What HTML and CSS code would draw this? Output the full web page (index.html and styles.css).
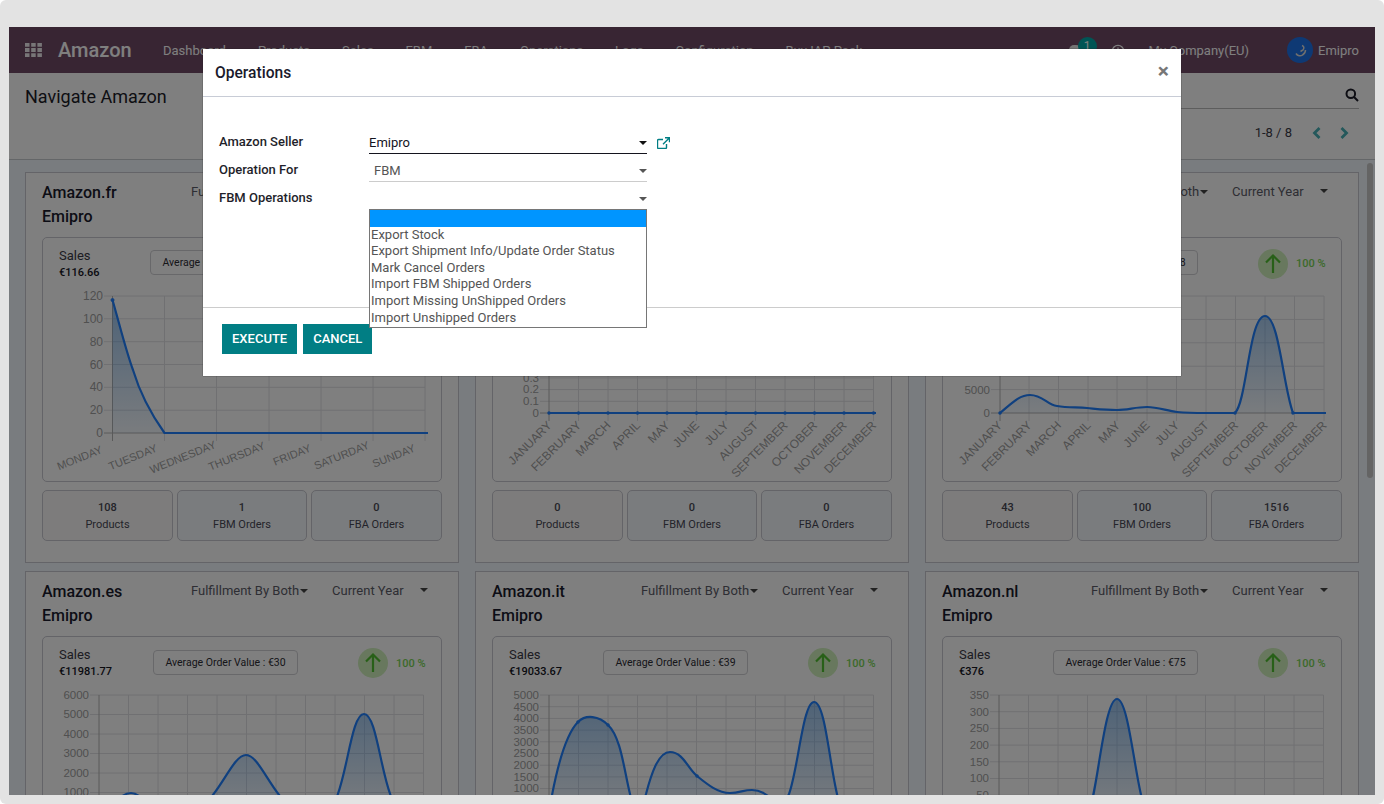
FILE: index.html

```html
<!DOCTYPE html>
<html>
<head>
    <title>Navigate Amazon</title>
    <link rel="stylesheet" href="styles.css">
</head>
<body>
<div class="frame">
    <!-- top navigation bar -->
    <header class="navbar">
        <svg class="apps" width="17" height="14" viewBox="0 0 17 14"><path d="M0 0h4.500v3.800H0zM6.200 0h4.500v3.800H6.200zM12.400 0h4.500v3.800h-4.500zM0 5.100h4.500v3.800H0zM6.200 5.100h4.500v3.800H6.200zM12.400 5.100h4.500v3.800h-4.500zM0 10.200h4.500V14H0zM6.200 10.200h4.500V14H6.200zM12.400 10.200h4.500V14h-4.500z"/></svg>
        <span class="brand">Amazon</span>
        <nav class="menu">
            <a>Dashboard</a>
            <a>Products</a>
            <a>Sales</a>
            <a>FBM</a>
            <a>FBA</a>
            <a>Operations</a>
            <a>Logs</a>
            <a>Configuration</a>
            <a>Buy IAP Pack</a>
        </nav>
        <div class="systray">
            <span class="chat"><i class="bubble"></i><b class="badge">1</b></span>
            <svg class="clock" width="14" height="14" viewBox="0 0 14 14"><circle cx="7" cy="7" r="5.700"/><path d="M7 3.500V7l2.400 1.500"/></svg>
            <span class="company">My Company(EU)</span>
            <span class="user">
                <svg class="avatar" width="26" height="26" viewBox="0 0 26 26"><circle cx="13" cy="13" r="13"/><path d="M15 8.500c2 .8 2.500 2.500 1 4.500l-2.500 1.500"/><path d="M9 16.500c1.500 2.500 4.500 3 6.500 1.500 2-1.200 3-3 3-5"/></svg>
                Emipro
            </span>
        </div>
    </header>

    <!-- title, search and pager -->
    <section class="control-panel">
        <h1>Navigate Amazon</h1>
        <div class="control-right">
            <div class="search">
                <svg width="14" height="14" viewBox="0 0 14 14"><circle cx="5.800" cy="5.800" r="4.300"/><path d="M9 9l4 4"/></svg>
            </div>
            <div class="pager">
                <span>1-8 / 8</span>
                <svg width="10" height="14" viewBox="0 0 10 14"><path d="M7.500 2L2.500 7l5 5"/></svg>
                <svg width="10" height="14" viewBox="0 0 10 14"><path d="M2.500 2l5 5-5 5"/></svg>
            </div>
        </div>
    </section>

    <!-- marketplace cards -->
    <main class="dashboard">
        <article class="card">
            <div class="card-head">
                <div class="card-title">Amazon.fr<br>Emipro</div>
                <div class="filter filter-type">Fulfillment By Both<i class="caret"></i></div>
                <div class="filter filter-year">Current Year<i class="caret"></i></div>
            </div>
            <div class="chart-box">
                <div class="chart-head">
                    <div class="sales">Sales<b>€116.66</b></div>
                    <div class="avg">Average Order Value : €117</div>
                    <div class="trend"><svg width="30" height="30" viewBox="0 0 30 30"><circle cx="15" cy="15" r="15"/><path d="M15 24V6.500M8 13.500l7-7 7 7"/></svg>100 %</div>
                </div>
                <svg class="chart" width="398" height="195">
                    <defs>
                        <linearGradient id="fill-week" gradientUnits="userSpaceOnUse" x1="0" y1="10" x2="0" y2="147"><stop offset="0" stop-color="#1a78d8" stop-opacity=".45"/><stop offset="1" stop-color="#1a78d8" stop-opacity=".05"/></linearGradient>
                        <linearGradient id="fill-year" gradientUnits="userSpaceOnUse" x1="0" y1="10" x2="0" y2="127"><stop offset="0" stop-color="#1a78d8" stop-opacity=".45"/><stop offset="1" stop-color="#1a78d8" stop-opacity=".05"/></linearGradient>
                    </defs>
                    <path class="grid" d="M121.500 10V155M173.500 10V155M226 10V155M278 10V155M330 10V155M382 10V155M61 10H382M61 32.800H382M61 55.700H382M61 78.500H382M61 101.300H382M61 124.200H382"/>
                    <path class="axis" d="M69.500 10V155M61 147H382"/>
                    <text class="tick tick-large" x="60" y="14">120</text><text class="tick tick-large" x="60" y="37">100</text><text class="tick tick-large" x="60" y="60">80</text><text class="tick tick-large" x="60" y="83">60</text><text class="tick tick-large" x="60" y="105">40</text><text class="tick tick-large" x="60" y="128">20</text><text class="tick tick-large" x="60" y="151">0</text>
                    <path class="area-week" d="M69.500 14C77 40 83 65 90 84C96 104 108 128 121.500 147H385H69.500Z"/>
                    <path class="line" d="M69.500 14C77 40 83 65 90 84C96 104 108 128 121.500 147H385"/>
                    <circle class="dot" cx="69.500" cy="14" r="1.500"/>
                    <g class="label label-week">
                        <text transform="translate(60 166.500) rotate(-22)">MONDAY</text>
                        <text transform="translate(115 165) rotate(-22)">TUESDAY</text>
                        <text transform="translate(173.700 161.500) rotate(-22)">WEDNESDAY</text>
                        <text transform="translate(222.700 162.500) rotate(-22)">THURSDAY</text>
                        <text transform="translate(268.700 165) rotate(-22)">FRIDAY</text>
                        <text transform="translate(327 162) rotate(-22)">SATURDAY</text>
                        <text transform="translate(373 165) rotate(-22)">SUNDAY</text>
                    </g>
                </svg>
            </div>
            <div class="stats">
                <div class="stat stat-products"><b>108</b>Products</div>
                <div class="stat stat-orders"><b>1</b>FBM Orders</div>
                <div class="stat stat-orders"><b>0</b>FBA Orders</div>
            </div>
        </article>

        <article class="card">
            <div class="card-head">
                <div class="card-title">Amazon.de<br>Emipro</div>
                <div class="filter filter-type">Fulfillment By Both<i class="caret"></i></div>
                <div class="filter filter-year">Current Year<i class="caret"></i></div>
            </div>
            <div class="chart-box">
                <div class="chart-head">
                    <div class="sales">Sales<b>€0</b></div>
                    <div class="avg">Average Order Value : €0</div>
                    <div class="trend"><svg width="30" height="30" viewBox="0 0 30 30"><circle cx="15" cy="15" r="15"/><path d="M15 24V6.500M8 13.500l7-7 7 7"/></svg>0 %</div>
                </div>
                <svg class="chart" width="398" height="195">
                    <path class="grid" d="M85.500 10V135M115 10V135M144.500 10V135M174 10V135M203.500 10V135M233 10V135M262.500 10V135M292 10V135M321.500 10V135M351 10V135M380.500 10V135M47 10H380.500M47 21.700H380.500M47 33.400H380.500M47 45.100H380.500M47 56.800H380.500M47 68.500H380.500M47 80.200H380.500M47 91.900H380.500M47 103.600H380.500M47 115.300H380.500"/>
                    <path class="axis" d="M56 10V135M47 127H380.500"/>
                    <text class="tick" x="46" y="14">1.0</text><text class="tick" x="46" y="26">0.9</text><text class="tick" x="46" y="37">0.8</text><text class="tick" x="46" y="49">0.7</text><text class="tick" x="46" y="61">0.6</text><text class="tick" x="46" y="72">0.5</text><text class="tick" x="46" y="84">0.4</text><text class="tick" x="46" y="96">0.3</text><text class="tick" x="46" y="107">0.2</text><text class="tick" x="46" y="119">0.1</text><text class="tick" x="46" y="131">0</text>
                    <path class="line" d="M56 127H383"/>
                    <path class="dots" d="M56 127h.01M85.500 127h.01M115 127h.01M144.500 127h.01M174 127h.01M203.500 127h.01M233 127h.01M262.500 127h.01M292 127h.01M321.500 127h.01M351 127h.01M380.500 127h.01"/>
                    <g class="label">
                        <text transform="translate(59.500 140) rotate(-45)">JANUARY</text>
                        <text transform="translate(89 140) rotate(-45)">FEBRUARY</text>
                        <text transform="translate(118.500 140) rotate(-45)">MARCH</text>
                        <text transform="translate(148 140) rotate(-45)">APRIL</text>
                        <text transform="translate(177.500 140) rotate(-45)">MAY</text>
                        <text transform="translate(207 140) rotate(-45)">JUNE</text>
                        <text transform="translate(236.500 140) rotate(-45)">JULY</text>
                        <text transform="translate(266 140) rotate(-45)">AUGUST</text>
                        <text transform="translate(295.500 140) rotate(-45)">SEPTEMBER</text>
                        <text transform="translate(325 140) rotate(-45)">OCTOBER</text>
                        <text transform="translate(354.500 140) rotate(-45)">NOVEMBER</text>
                        <text transform="translate(384 140) rotate(-45)">DECEMBER</text>
                    </g>
                </svg>
            </div>
            <div class="stats">
                <div class="stat stat-products"><b>0</b>Products</div>
                <div class="stat stat-orders"><b>0</b>FBM Orders</div>
                <div class="stat stat-orders"><b>0</b>FBA Orders</div>
            </div>
        </article>

        <article class="card">
            <div class="card-head">
                <div class="card-title">Amazon.com<br>Emipro</div>
                <div class="filter filter-type">Fulfillment By Both<i class="caret"></i></div>
                <div class="filter filter-year">Current Year<i class="caret"></i></div>
            </div>
            <div class="chart-box">
                <div class="chart-head">
                    <div class="sales">Sales<b>€34128.52</b></div>
                    <div class="avg">Average Order Value : €78</div>
                    <div class="trend"><svg width="30" height="30" viewBox="0 0 30 30"><circle cx="15" cy="15" r="15"/><path d="M15 24V6.500M8 13.500l7-7 7 7"/></svg>100 %</div>
                </div>
                <svg class="chart" width="398" height="195">
                    <path class="grid" d="M86 10V135M115.500 10V135M145 10V135M174 10V135M204 10V135M233.500 10V135M263 10V135M292.500 10V135M322 10V135M351.500 10V135M381 10V135M48 10H381M48 33.400H381M48 56.800H381M48 80.200H381M48 103.600H381"/>
                    <path class="axis" d="M57 10V135M48 127H381"/>
                    <text class="tick" x="47" y="14">25000</text><text class="tick" x="47" y="37">20000</text><text class="tick" x="47" y="61">15000</text><text class="tick" x="47" y="84">10000</text><text class="tick" x="47" y="108">5000</text><text class="tick" x="47" y="131">0</text>
                    <path class="area-year" d="M57 127C68 118 76 109 87 109C100 109 104 119 114 120C125 122 134 121 144 122C155 123 163 124 174 124C185 124 192 121 204 121C215 121 224 125 234 126C245 127 255 127 263 127H292C304 115 306 30 322 30C336 30 340 100 350 127H383H57Z"/>
                    <path class="line" d="M57 127C68 118 76 109 87 109C100 109 104 119 114 120C125 122 134 121 144 122C155 123 163 124 174 124C185 124 192 121 204 121C215 121 224 125 234 126C245 127 255 127 263 127H292C304 115 306 30 322 30C336 30 340 100 350 127H383"/>
                    <path class="dots" d="M57 127h.01M292 127h.01M350 127h.01"/>
                    <g class="label">
                        <text transform="translate(60 140) rotate(-45)">JANUARY</text>
                        <text transform="translate(89.500 140) rotate(-45)">FEBRUARY</text>
                        <text transform="translate(119 140) rotate(-45)">MARCH</text>
                        <text transform="translate(148.500 140) rotate(-45)">APRIL</text>
                        <text transform="translate(178 140) rotate(-45)">MAY</text>
                        <text transform="translate(207.500 140) rotate(-45)">JUNE</text>
                        <text transform="translate(237 140) rotate(-45)">JULY</text>
                        <text transform="translate(266.500 140) rotate(-45)">AUGUST</text>
                        <text transform="translate(296 140) rotate(-45)">SEPTEMBER</text>
                        <text transform="translate(325.500 140) rotate(-45)">OCTOBER</text>
                        <text transform="translate(355 140) rotate(-45)">NOVEMBER</text>
                        <text transform="translate(384.500 140) rotate(-45)">DECEMBER</text>
                    </g>
                </svg>
            </div>
            <div class="stats">
                <div class="stat stat-products"><b>43</b>Products</div>
                <div class="stat stat-orders"><b>100</b>FBM Orders</div>
                <div class="stat stat-orders"><b>1516</b>FBA Orders</div>
            </div>
        </article>

        <article class="card">
            <div class="card-head">
                <div class="card-title">Amazon.es<br>Emipro</div>
                <div class="filter filter-type">Fulfillment By Both<i class="caret"></i></div>
                <div class="filter filter-year">Current Year<i class="caret"></i></div>
            </div>
            <div class="chart-box">
                <div class="chart-head">
                    <div class="sales">Sales<b>€11981.77</b></div>
                    <div class="avg">Average Order Value : €30</div>
                    <div class="trend"><svg width="30" height="30" viewBox="0 0 30 30"><circle cx="15" cy="15" r="15"/><path d="M15 24V6.500M8 13.500l7-7 7 7"/></svg>100 %</div>
                </div>
                <svg class="chart" width="398" height="195">
                    <path class="grid" d="M85.500 10V135M115 10V135M144.500 10V135M174 10V135M203.500 10V135M233 10V135M262.500 10V135M292 10V135M321.500 10V135M351 10V135M380.500 10V135M47 10H380.500M47 29.500H380.500M47 49H380.500M47 68.500H380.500M47 88H380.500M47 107.500H380.500"/>
                    <path class="axis" d="M56 10V135M47 127H380.500"/>
                    <text class="tick" x="46" y="14">6000</text><text class="tick" x="46" y="33">5000</text><text class="tick" x="46" y="53">4000</text><text class="tick" x="46" y="72">3000</text><text class="tick" x="46" y="92">2000</text><text class="tick" x="46" y="111">1000</text><text class="tick" x="46" y="131">0</text>
                    <path class="area-year" d="M56 127C70 127 75 108 88 108C100 108 105 127 115 127H144C172 127 187 70 203 70C219 70 234 127 262 127H280C303 127 305 29 321 29C337 29 339 127 362 127H380.500H56Z"/>
                    <path class="line" d="M56 127C70 127 75 108 88 108C100 108 105 127 115 127H144C172 127 187 70 203 70C219 70 234 127 262 127H280C303 127 305 29 321 29C337 29 339 127 362 127H380.500"/>
                </svg>
            </div>
            <div class="stats">
                <div class="stat stat-products"><b>52</b>Products</div>
                <div class="stat stat-orders"><b>12</b>FBM Orders</div>
                <div class="stat stat-orders"><b>388</b>FBA Orders</div>
            </div>
        </article>

        <article class="card">
            <div class="card-head">
                <div class="card-title">Amazon.it<br>Emipro</div>
                <div class="filter filter-type">Fulfillment By Both<i class="caret"></i></div>
                <div class="filter filter-year">Current Year<i class="caret"></i></div>
            </div>
            <div class="chart-box">
                <div class="chart-head">
                    <div class="sales">Sales<b>€19033.67</b></div>
                    <div class="avg">Average Order Value : €39</div>
                    <div class="trend"><svg width="30" height="30" viewBox="0 0 30 30"><circle cx="15" cy="15" r="15"/><path d="M15 24V6.500M8 13.500l7-7 7 7"/></svg>100 %</div>
                </div>
                <svg class="chart" width="398" height="195">
                    <path class="grid" d="M85.500 10V135M115 10V135M144.500 10V135M174 10V135M203.500 10V135M233 10V135M262.500 10V135M292 10V135M321.500 10V135M351 10V135M380.500 10V135M47 10H380.500M47 21.700H380.500M47 33.400H380.500M47 45.100H380.500M47 56.800H380.500M47 68.500H380.500M47 80.200H380.500M47 91.900H380.500M47 103.600H380.500M47 115.300H380.500"/>
                    <path class="axis" d="M56 10V135M47 127H380.500"/>
                    <text class="tick" x="46" y="14">5000</text><text class="tick" x="46" y="26">4500</text><text class="tick" x="46" y="37">4000</text><text class="tick" x="46" y="49">3500</text><text class="tick" x="46" y="61">3000</text><text class="tick" x="46" y="72">2500</text><text class="tick" x="46" y="84">2000</text><text class="tick" x="46" y="96">1500</text><text class="tick" x="46" y="107">1000</text><text class="tick" x="46" y="119">500</text><text class="tick" x="46" y="131">0</text>
                    <path class="area-year" d="M56 127C63 85 72 50 85 37C93 29 106 31 115 40C128 52 131 85 137 109C139 118 140 127 144 127C149 127 150 118 153 109C158 90 165 67 177 67C190 67 195 84 204 91C215 100 225 108 237 108C247 108 250 105 259 105C268 105 274 110 280 115C285 122 290 122 296 109C305 85 310 17 321 17C332 17 336 75 344 109C346 118 348 127 351 127H380.500H56Z"/>
                    <path class="line" d="M56 127C63 85 72 50 85 37C93 29 106 31 115 40C128 52 131 85 137 109C139 118 140 127 144 127C149 127 150 118 153 109C158 90 165 67 177 67C190 67 195 84 204 91C215 100 225 108 237 108C247 108 250 105 259 105C268 105 274 110 280 115C285 122 290 122 296 109C305 85 310 17 321 17C332 17 336 75 344 109C346 118 348 127 351 127H380.500"/>
                    <path class="dots" d="M85 37h.01M115 40h.01M204 91h.01"/>
                </svg>
            </div>
            <div class="stats">
                <div class="stat stat-products"><b>31</b>Products</div>
                <div class="stat stat-orders"><b>8</b>FBM Orders</div>
                <div class="stat stat-orders"><b>480</b>FBA Orders</div>
            </div>
        </article>

        <article class="card">
            <div class="card-head">
                <div class="card-title">Amazon.nl<br>Emipro</div>
                <div class="filter filter-type">Fulfillment By Both<i class="caret"></i></div>
                <div class="filter filter-year">Current Year<i class="caret"></i></div>
            </div>
            <div class="chart-box">
                <div class="chart-head">
                    <div class="sales">Sales<b>€376</b></div>
                    <div class="avg">Average Order Value : €75</div>
                    <div class="trend"><svg width="30" height="30" viewBox="0 0 30 30"><circle cx="15" cy="15" r="15"/><path d="M15 24V6.500M8 13.500l7-7 7 7"/></svg>100 %</div>
                </div>
                <svg class="chart" width="398" height="195">
                    <path class="grid" d="M85.500 10V135M115 10V135M144.500 10V135M174 10V135M203.500 10V135M233 10V135M262.500 10V135M292 10V135M321.500 10V135M351 10V135M380.500 10V135M47 10H380.500M47 26.700H380.500M47 43.400H380.500M47 60.100H380.500M47 76.800H380.500M47 93.500H380.500M47 110.200H380.500"/>
                    <path class="axis" d="M56 10V135M47 127H380.500"/>
                    <text class="tick" x="46" y="14">350</text><text class="tick" x="46" y="31">300</text><text class="tick" x="46" y="47">250</text><text class="tick" x="46" y="64">200</text><text class="tick" x="46" y="81">150</text><text class="tick" x="46" y="97">100</text><text class="tick" x="46" y="114">50</text><text class="tick" x="46" y="131">0</text>
                    <path class="area-year" d="M56 127H144C153 127 160 14 174 14C188 14 194 127 206 127H380.500H56Z"/>
                    <path class="line" d="M56 127H144C153 127 160 14 174 14C188 14 194 127 206 127H380.500"/>
                </svg>
            </div>
            <div class="stats">
                <div class="stat stat-products"><b>9</b>Products</div>
                <div class="stat stat-orders"><b>0</b>FBM Orders</div>
                <div class="stat stat-orders"><b>5</b>FBA Orders</div>
            </div>
        </article>
        <div class="scrollbar"></div>
    </main>

    <!-- the wizard dialog -->
    <div class="backdrop">
        <div class="modal">
            <div class="modal-head">
                <h2>Operations</h2>
                <span class="close">×</span>
            </div>
            <div class="modal-body">
                <div class="field">
                    <label>Amazon Seller</label>
                    <div class="select select-focus">Emipro<i class="caret caret-dark"></i></div>
                    <svg class="ext-link" width="13" height="12" viewBox="0 0 13 12"><path d="M9.500 7v3.500a1 1 0 0 1-1 1h-7a1 1 0 0 1-1-1v-7a1 1 0 0 1 1-1H6"/><path d="M8 .7h4.500v4.500M12.500 .7L6 7.200"/></svg>
                </div>
                <div class="field">
                    <label>Operation For</label>
                    <div class="select select-value">FBM<i class="caret"></i></div>
                </div>
                <div class="field">
                    <label>FBM Operations</label>
                    <div class="select select-open">
                        <i class="caret"></i>
                        <ul class="dropdown">
                            <li class="selected"></li>
                            <li>Export Stock</li>
                            <li>Export Shipment Info/Update Order Status</li>
                            <li>Mark Cancel Orders</li>
                            <li>Import FBM Shipped Orders</li>
                            <li>Import Missing UnShipped Orders</li>
                            <li>Import Unshipped Orders</li>
                        </ul>
                    </div>
                </div>
            </div>
            <div class="modal-foot">
                <button>Execute</button>
                <button>Cancel</button>
            </div>
        </div>
    </div>
</div>
</body>
</html>
```

FILE: styles.css

```css
/* Page and the window frame */
* {
    box-sizing: border-box;
}
html, body {
    height: 100%;
}
html {
    background: #fff;
}
body {
    margin: 0;
    padding: 27px 9px 9px;
    background: #e3e3e3;
    border-radius: 6px;
    font-family: Roboto, sans-serif;
    font-size: 13px;
    overflow: hidden;
}
.frame {
    position: relative;
    width: 1366px;
    height: 768px;
    background: #fff;
    overflow: hidden;
    display: flex;
    flex-direction: column;
}

/* Navigation bar */
.navbar {
    height: 46px;
    flex: none;
    background: #714b67;
    color: #fff;
    display: flex;
    align-items: center;
    padding: 0 16px;
}
.apps {
    fill: #fff;
    margin-right: 16px;
    opacity: .9;
}
.brand {
    font-size: 20px;
    font-weight: 500;
    width: 105px;
}
.menu {
    display: flex;
    gap: 32px;
}
.systray {
    margin-left: auto;
    display: flex;
    align-items: center;
}
.chat {
    position: relative;
    width: 22px;
    height: 14px;
    margin-right: 20px;
}
.bubble {
    position: absolute;
    left: 0;
    top: 2px;
    width: 12px;
    height: 10px;
    border-radius: 6px;
    background: #e8e8e8;
}
.badge {
    position: absolute;
    left: 9px;
    top: -6px;
    width: 19px;
    height: 19px;
    border-radius: 50%;
    background: #00aaaa;
    font-size: 12px;
    font-weight: 400;
    text-align: center;
    line-height: 19px;
}
.clock {
    fill: none;
    stroke: #fff;
    stroke-width: 1.300;
    margin: 2px 24px 0 0;
}
.company {
    margin-right: 38px;
}
.user {
    display: flex;
    align-items: center;
    gap: 5px;
}
.avatar circle {
    fill: #1c72e8;
}
.avatar path {
    fill: none;
    stroke: #ddd;
    stroke-width: 1.500;
}

/* Control panel */
.control-panel {
    height: 87px;
    flex: none;
    padding: 0 16px;
    display: flex;
    justify-content: space-between;
    border-bottom: 1px solid #c8ccd0;
}
.control-panel h1 {
    margin: 14px 0 0;
    font-size: 18px;
    line-height: 20px;
    font-weight: 400;
    color: #1c1c28;
}
.control-right {
    width: 480px;
}
.search {
    height: 36px;
    padding-top: 8px;
    border-bottom: 1px solid #bbb;
    display: flex;
    justify-content: flex-end;
    align-items: center;
}
.search svg {
    fill: none;
    stroke: #1c1c28;
    stroke-width: 2;
}
.pager {
    display: flex;
    justify-content: flex-end;
    align-items: center;
    margin-top: 16px;
    color: #3a3a46;
}
.pager span {
    margin-right: 20px;
}
.pager svg {
    fill: none;
    stroke: #48b0b6;
    stroke-width: 2.800;
    margin-right: 17px;
}
.pager svg:last-child {
    margin-right: 10px;
}

/* Dashboard grid */
.dashboard {
    position: relative;
    flex: 1;
    overflow: hidden;
    padding: 12.200px 16px 0;
    background: #f3f9ff;
    display: grid;
    grid-template-columns: repeat(3, 434px);
    grid-auto-rows: 391.300px;
    gap: 8px 16px;
}
.scrollbar {
    position: absolute;
    right: 2px;
    top: 3px;
    width: 6px;
    height: 315px;
    border-radius: 3px;
    background: #c8c8c8;
}
.card {
    background: #fff;
    border: 1px solid #c8c8d0;
    padding: 0 16px;
}
.card-head {
    height: 63.800px;
    display: flex;
    position: relative;
}
.card-title {
    width: 149px;
    padding-top: 8px;
    font-size: 16px;
    line-height: 24px;
    font-weight: 500;
    color: #1a1a2c;
}
.filter {
    padding-top: 9.800px;
    color: #5c5c68;
    line-height: 18px;
    white-space: nowrap;
}
.filter-type {
    width: 141px;
}
.filter-year {
    width: 96px;
    position: relative;
}
.caret {
    display: inline-block;
    width: 0;
    height: 0;
    margin-left: 1px;
    vertical-align: 2px;
    border-left: 4px solid transparent;
    border-right: 4px solid transparent;
    border-top: 4px solid #444;
}
.filter-year .caret {
    position: absolute;
    right: 0;
    top: 16px;
}

/* Chart panel in a card */
.chart-box {
    height: 245px;
    border: 1px solid #c8c8d0;
    border-radius: 5px;
    overflow: hidden;
}
.chart-head {
    height: 48px;
    padding: 4px 16px 0;
    display: grid;
    grid-template-columns: 60px 213px auto;
    align-items: center;
}
.sales {
    color: #3a3a46;
    line-height: 17px;
    white-space: nowrap;
}
.sales b {
    display: block;
    font-size: 11px;
    font-weight: 500;
    color: #14141e;
}
.avg {
    justify-self: center;
    height: 25px;
    margin-bottom: 2px;
    padding: 0 11px;
    border: 1px solid #d0d0d4;
    border-radius: 4px;
    font-size: 10.500px;
    line-height: 23px;
    color: #2c2c34;
    white-space: nowrap;
}
.trend {
    display: flex;
    align-items: center;
    gap: 8px;
    margin-left: 26px;
    font-size: 11px;
    font-weight: 500;
    color: #78d455;
    white-space: nowrap;
}
.trend svg circle {
    fill: #d0f0bc;
}
.trend svg path {
    fill: none;
    stroke: #50c030;
    stroke-width: 2.200;
}
.chart {
    display: block;
}
.grid {
    fill: none;
    stroke: #e0e0e4;
    stroke-width: 1;
}
.axis {
    fill: none;
    stroke: #b4b4b4;
    stroke-width: 1;
}
.tick {
    font: 11.500px "Liberation Sans", sans-serif;
    fill: #a0a0a0;
    text-anchor: end;
}
.tick-large {
    font-size: 12px;
}
.label text {
    font: 12px "Liberation Sans", sans-serif;
    fill: #a0a0a0;
    text-anchor: end;
}
.label-week text {
    font-size: 11px;
}
.line {
    fill: none;
    stroke: #2080ff;
    stroke-width: 2.200;
}
.dot {
    fill: #2080ff;
    stroke: #2080ff;
}
.dots {
    fill: none;
    stroke: #2080ff;
    stroke-width: 3.500;
    stroke-linecap: round;
}
.area-week {
    fill: url(#fill-week);
}
.area-year {
    fill: url(#fill-year);
}

/* The three counters below the chart */
.stats {
    display: grid;
    grid-template-columns: 131px 130px 131px;
    gap: 4px;
    margin-top: 8px;
}
.stat {
    height: 51px;
    border: 1px solid #c8c8d0;
    border-radius: 5px;
    padding-top: 8px;
    text-align: center;
    font-size: 11px;
    line-height: 17px;
    color: #484854;
}
.stat b {
    display: block;
    font-weight: 500;
}
.stat-products {
    background: #fbf9f8;
}
.stat-orders {
    background: #f4f8fc;
}

/* Modal dialog */
.backdrop {
    position: absolute;
    left: 0;
    top: 0;
    right: 0;
    bottom: 0;
    background: rgba(0, 0, 0, .5);
    display: flex;
    justify-content: center;
    padding-top: 22px;
    align-items: flex-start;
}
.modal {
    width: 978px;
    height: 327px;
    background: #fff;
    box-shadow: 0 0 1px #222;
    display: flex;
    flex-direction: column;
}
.modal-head {
    height: 48px;
    flex: none;
    padding: 0 12px;
    display: flex;
    justify-content: space-between;
    align-items: center;
    border-bottom: 1px solid #c8ccd6;
}
.modal-head h2 {
    margin: 0;
    font-size: 15.600px;
    font-weight: 500;
    color: #1a1a2c;
}
.close {
    margin-bottom: 3px;
    font-size: 21px;
    font-weight: 700;
    color: #777;
}
.modal-body {
    height: 211px;
    flex: none;
    padding: 31px 16px 0;
    border-bottom: 1px solid #ccc;
}
.field {
    height: 28px;
    display: flex;
}
.field label {
    width: 150px;
    font-weight: 500;
    line-height: 28px;
    color: #1f1f2b;
}
.select {
    position: relative;
    width: 278px;
    height: 26px;
    line-height: 30px;
}
.select .caret {
    position: absolute;
    right: 0;
    top: 13px;
    border-top-color: #555;
}
.select .caret-dark {
    border-top-color: #111;
}
.select-focus {
    border-bottom: 1px solid #14141e;
    color: #14141e;
}
.select-value {
    border-bottom: 1px solid #ccc;
    color: #555;
    padding-left: 5px;
}
.ext-link {
    fill: none;
    stroke: #017e84;
    stroke-width: 1.400;
    margin: 9px 0 0 10px;
}
.dropdown {
    position: absolute;
    left: 0;
    top: 25px;
    width: 278px;
    height: 119px;
    margin: 0;
    padding: 0;
    list-style: none;
    background: #fff;
    border: 1px solid #767676;
    color: #555;
    line-height: 16.500px;
    z-index: 2;
}
.dropdown li {
    height: 16.560px;
    padding-left: 1px;
}
.dropdown .selected {
    height: 16.800px;
    background: #0095ff;
}
.modal-foot {
    padding: 16px 19px;
    display: flex;
    gap: 6px;
}
.modal-foot button {
    height: 30px;
    padding: 0 10px 2px;
    border: 0;
    background: #017e84;
    color: #fff;
    font: 500 13px Roboto, sans-serif;
    text-transform: uppercase;
}
```
